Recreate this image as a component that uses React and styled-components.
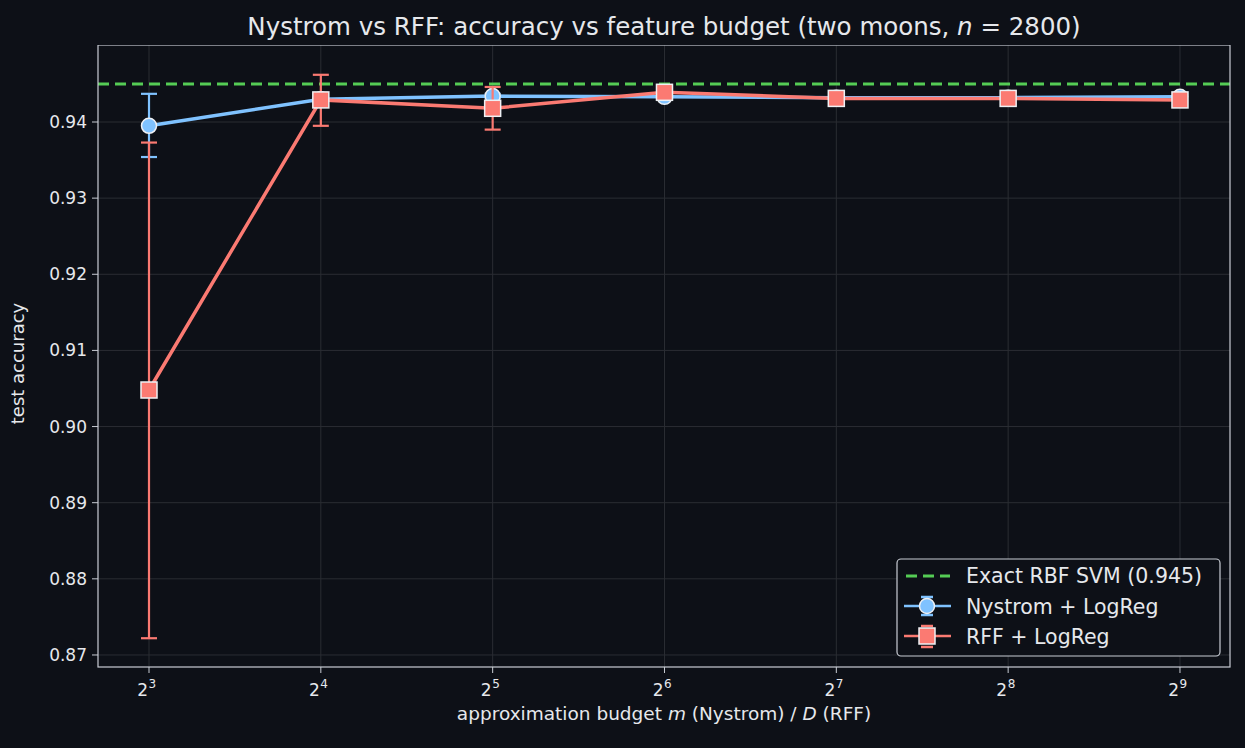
import React from "react";
import styled, { createGlobalStyle } from "styled-components";

const Global = createGlobalStyle`
  html, body { margin: 0; background: #0d1017; }
  body { font-family: "DejaVu Sans", "Verdana", sans-serif; color: #e6e8ec; }
`;

const Figure = styled.div`
  width: 1245px;
  height: 748px;
  display: flex;
  flex-direction: column;
  background: #0d1017;
`;

const Title = styled.div`
  height: 45px;
  box-sizing: border-box;
  padding-left: 98px;
  width: 1230px;
  display: flex;
  align-items: center;
  justify-content: center;
  font-size: 24.5px;
  padding-top: 8px;
  white-space: nowrap;
`;

const Row = styled.div`
  display: flex;
  height: 656px;
`;

const YLabel = styled.div`
  width: 36px;
  display: flex;
  align-items: center;
  justify-content: center;
  span {
    transform: rotate(-90deg);
    white-space: nowrap;
    font-size: 18px;
    margin-top: -20px;
  }
`;

const XLabel = styled.div`
  padding-left: 98px;
  width: 1132px;
  text-align: center;
  font-size: 18.5px;
  margin-top: 2px;
`;

const X0 = 149, DX = 171.83;
const xs = (i) => X0 + i * DX;
const ys = (v) => 122 + (0.94 - v) * 7614;

const nys = [
  [0.9395, 0.9354, 0.9437], [0.943, 0.9428, 0.9432], [0.9434, 0.9431, 0.9437],
  [0.9433, 0.9431, 0.9435], [0.9432, 0.943, 0.9434], [0.9432, 0.943, 0.9434], [0.9433, 0.9431, 0.9435],
];
const rff = [
  [0.9048, 0.8722, 0.9373], [0.9429, 0.9395, 0.9462], [0.9418, 0.939, 0.9446],
  [0.9439, 0.9435, 0.9443], [0.9431, 0.9428, 0.9434], [0.9431, 0.9428, 0.9434], [0.9429, 0.9426, 0.9432],
];
const BLUE = "#7fc2ff", RED = "#fb7a72", EDGE = "#eef0f4";

function ErrBars({ data, color }) {
  return data.map(([, lo, hi], i) => (
    <g key={i} stroke={color} strokeWidth="2.2">
      <line x1={xs(i)} x2={xs(i)} y1={ys(lo)} y2={ys(hi)} />
      <line x1={xs(i) - 8} x2={xs(i) + 8} y1={ys(lo)} y2={ys(lo)} />
      <line x1={xs(i) - 8} x2={xs(i) + 8} y1={ys(hi)} y2={ys(hi)} />
    </g>
  ));
}

const line = (d) => d.map(([v], i) => `${xs(i)},${ys(v)}`).join(" ");

function Chart() {
  const yt = [0.87, 0.88, 0.89, 0.9, 0.91, 0.92, 0.93, 0.94];
  return (
    <svg width="1209" height="656" viewBox="36 45 1209 656">
      <g stroke="#2a2d33" strokeWidth="1">
        {yt.map((v) => <line key={v} x1="98" x2="1230" y1={ys(v)} y2={ys(v)} />)}
        {[0, 1, 2, 3, 4, 5, 6].map((i) => <line key={i} y1="45" y2="667" x1={xs(i)} x2={xs(i)} />)}
      </g>
      <line x1="98" x2="1230" y1={ys(0.945)} y2={ys(0.945)} stroke="#55cc55" strokeWidth="3" strokeDasharray="11 6" />
      <ErrBars data={nys} color={BLUE} />
      <polyline points={line(nys)} fill="none" stroke={BLUE} strokeWidth="3.5" />
      {nys.map(([v], i) => <circle key={i} cx={xs(i)} cy={ys(v)} r="7.5" fill={BLUE} stroke={EDGE} strokeWidth="1.5" />)}
      <ErrBars data={rff} color={RED} />
      <polyline points={line(rff)} fill="none" stroke={RED} strokeWidth="3.5" />
      {rff.map(([v], i) => <rect key={i} x={xs(i) - 8} y={ys(v) - 8} width="16" height="16" fill={RED} stroke={EDGE} strokeWidth="1.5" />)}
      <rect x="98" y="45" width="1132" height="622" fill="none" stroke="#c8ccd4" strokeWidth="1.2" />
      <g fill="#e6e8ec" fontSize="17">
        {yt.map((v) => (
          <g key={v}>
            <line x1="92" x2="98" y1={ys(v)} y2={ys(v)} stroke="#c8ccd4" />
            <text x="87" y={ys(v) + 6} textAnchor="end">{v.toFixed(2)}</text>
          </g>
        ))}
        {[3, 4, 5, 6, 7, 8, 9].map((p, i) => (
          <g key={p}>
            <line x1={xs(i)} x2={xs(i)} y1="667" y2="673" stroke="#c8ccd4" />
            <text x={xs(i) - 1} y="696" textAnchor="end">2</text>
            <text x={xs(i) - 0.5} y="688" fontSize="12">{p}</text>
          </g>
        ))}
      </g>
      <g>
        <rect x="897" y="559" width="323" height="97" rx="4" fill="#0d1017" stroke="#c8ccd4" strokeWidth="1.2" />
        <line x1="906" x2="950" y1="576" y2="576" stroke="#55cc55" strokeWidth="3" strokeDasharray="11 6" />
        <g stroke={BLUE} strokeWidth="2.5">
          <line x1="904" x2="951" y1="606" y2="606" />
          <line x1="927" x2="927" y1="597" y2="615" />
          <line x1="921" x2="933" y1="597" y2="597" />
          <line x1="921" x2="933" y1="615" y2="615" />
        </g>
        <circle cx="927" cy="606" r="7.5" fill={BLUE} stroke={EDGE} strokeWidth="1.5" />
        <g stroke={RED} strokeWidth="2.5">
          <line x1="904" x2="951" y1="636" y2="636" />
          <line x1="921" x2="933" y1="626" y2="626" />
          <line x1="921" x2="933" y1="647" y2="647" />
        </g>
        <rect x="919" y="628" width="16" height="16" fill={RED} stroke={EDGE} strokeWidth="1.5" />
        <g fill="#e6e8ec" fontSize="20.5">
          <text x="966" y="583">Exact RBF SVM (0.945)</text>
          <text x="966" y="614">Nystrom + LogReg</text>
          <text x="966" y="644">RFF + LogReg</text>
        </g>
      </g>
    </svg>
  );
}

export default function App() {
  return (
    <>
      <Global />
      <Figure>
        <Title>Nystrom vs RFF: accuracy vs feature budget (two moons,&nbsp;<i>n</i>&nbsp;=&nbsp;2800)</Title>
        <Row>
          <YLabel><span>test accuracy</span></YLabel>
          <Chart />
        </Row>
        <XLabel>approximation budget <i>m</i> (Nystrom) / <i>D</i> (RFF)</XLabel>
      </Figure>
    </>
  );
}
